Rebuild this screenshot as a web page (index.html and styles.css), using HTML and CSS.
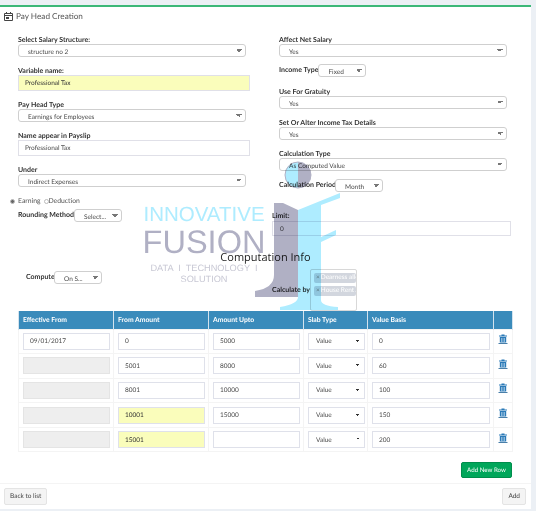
FILE: index.html
```html
<!DOCTYPE html>
<html lang="en">
<head>
    <meta charset="UTF-8">
    <title>Pay Head Creation</title>
    <link rel="stylesheet" href="styles.css">
</head>
<body>
    <main class="box">
        <header class="box-header">
            <svg class="cal-icon" width="9" height="9" viewBox="0 0 9 9">
                <path d="M0.5 1.5h8v7h-8z M0.5 3.5h8 M2.5 0v2 M6.5 0v2" fill="none" stroke="#444" stroke-width="1"/>
                <rect x="2" y="5" width="3" height="2" fill="#444"/>
            </svg>
            <h1>Pay Head Creation</h1>
        </header>

        <section class="form-cols">
            <div class="col">
                <div class="field">
                    <label>Select Salary Structure:</label>
                    <select class="sel"><option>structure no 2</option></select>
                </div>
                <div class="field">
                    <label>Variable name:</label>
                    <input class="txt wide required" value="Professional Tax">
                </div>
                <div class="field">
                    <label>Pay Head Type</label>
                    <select class="sel"><option>Earnings for Employees</option></select>
                </div>
                <div class="field">
                    <label>Name appear in Payslip</label>
                    <input class="txt wide" value="Professional Tax">
                </div>
                <div class="field">
                    <label>Under</label>
                    <select class="sel"><option>Indirect Expenses</option></select>
                </div>
            </div>
            <div class="col">
                <div class="field">
                    <label>Affect Net Salary</label>
                    <select class="sel"><option>Yes</option></select>
                </div>
                <div class="field-inline income-row">
                    <label>Income Type</label>
                    <select class="sel small"><option>Fixed</option></select>
                </div>
                <div class="field">
                    <label>Use For Gratuity</label>
                    <select class="sel"><option>Yes</option></select>
                </div>
                <div class="field">
                    <label>Set Or Alter Income Tax Details</label>
                    <select class="sel"><option>Yes</option></select>
                </div>
                <div class="field">
                    <label>Calculation Type</label>
                    <select class="sel"><option>As Computed Value</option></select>
                </div>
                <div class="field-inline period-row">
                    <label>Calculation Period</label>
                    <select class="sel small"><option>Month</option></select>
                </div>
            </div>
        </section>

        <section class="rounding-row">
            <div class="rounding-left">
                <div class="radios">
                    <span class="radio checked"></span><span class="radio-text">Earning</span>
                    <span class="radio"></span><span>Deduction</span>
                </div>
                <div class="field-inline rounding-field">
                    <label>Rounding Method</label>
                    <select class="sel small"><option>Select...</option></select>
                </div>
            </div>
            <div class="limit">
                <label>Limit:</label>
                <input class="txt limit-input" value="0">
            </div>
        </section>

        <h2 class="info-title">Computation Info</h2>

        <section class="compute-row">
            <div class="field-inline compute-field">
                <label>Compute</label>
                <select class="sel small"><option>On S...</option></select>
            </div>
            <div class="field-inline calc-by">
                <label>Calculate by</label>
                <div class="multi">
                    <span class="chip"><b>×</b>Dearness allo</span>
                    <span class="chip"><b>×</b>House Rent A</span>
                </div>
            </div>
        </section>

        <table class="slabs">
            <colgroup>
                <col class="c-date"><col class="c-amt"><col class="c-amt"><col class="c-type"><col class="c-basis"><col class="c-del">
            </colgroup>
            <thead>
                <tr><th>Effective From</th><th>From Amount</th><th>Amount Upto</th><th>Slab Type</th><th>Value Basis</th><th></th></tr>
            </thead>
            <tbody>
                <tr>
                    <td><input class="cell date" value="09/01/2017"></td>
                    <td><input class="cell" value="0"></td>
                    <td><input class="cell" value="5000"></td>
                    <td><select class="cell native"><option>Value</option></select></td>
                    <td><input class="cell" value="0"></td>
                    <td><svg class="trash" viewBox="0 0 10 10"><use href="#trash-shape"/></svg></td>
                </tr>
                <tr>
                    <td><input class="cell off" disabled></td>
                    <td><input class="cell" value="5001"></td>
                    <td><input class="cell" value="8000"></td>
                    <td><select class="cell native"><option>Value</option></select></td>
                    <td><input class="cell" value="60"></td>
                    <td><svg class="trash" viewBox="0 0 10 10"><use href="#trash-shape"/></svg></td>
                </tr>
                <tr>
                    <td><input class="cell off" disabled></td>
                    <td><input class="cell" value="8001"></td>
                    <td><input class="cell" value="10000"></td>
                    <td><select class="cell native"><option>Value</option></select></td>
                    <td><input class="cell" value="100"></td>
                    <td><svg class="trash" viewBox="0 0 10 10"><use href="#trash-shape"/></svg></td>
                </tr>
                <tr>
                    <td><input class="cell off" disabled></td>
                    <td><input class="cell required" value="10001"></td>
                    <td><input class="cell" value="15000"></td>
                    <td><select class="cell native"><option>Value</option></select></td>
                    <td><input class="cell" value="150"></td>
                    <td><svg class="trash" viewBox="0 0 10 10"><use href="#trash-shape"/></svg></td>
                </tr>
                <tr>
                    <td><input class="cell off" disabled></td>
                    <td><input class="cell required" value="15001"></td>
                    <td><input class="cell"></td>
                    <td><select class="cell native"><option>Value</option></select></td>
                    <td><input class="cell" value="200"></td>
                    <td><svg class="trash" viewBox="0 0 10 10"><use href="#trash-shape"/></svg></td>
                </tr>
            </tbody>
        </table>

        <div class="add-row-wrap">
            <button class="btn-green">Add New Row</button>
        </div>

        <footer class="box-footer">
            <button class="btn">Back to list</button>
            <button class="btn">Add</button>
        </footer>

        <!-- logo sits over the form as a watermark -->
        <div class="watermark">
            <div class="wm-text">
                <div class="wm-innovative">INNOVATIVE</div>
                <div class="wm-fusion">FUSION</div>
                <div class="wm-tag">DATA &nbsp;I&nbsp; TECHNOLOGY &nbsp;I<br>SOLUTION</div>
            </div>
            <svg class="wm-i" width="90" height="150" viewBox="0 0 90 150">
                <path d="M28 2A13 13 0 0 0 28 28z" fill="#aeecff"/>
                <path d="M28 2A13 13 0 0 1 28 28z" fill="#b0b0c4"/>
                <circle cx="28" cy="15" r="13" fill="none" stroke="#b0b0c4" stroke-width="1"/>
                <path d="M28 50L70 33V38L51 45V77L66 70V75L51 82V140Q51 146 68 147V150H10V147Q28 144 28 137z" fill="#aeecff"/>
                <path d="M4 43H13L28 50V137H-15V131Q4 128 4 115z" fill="#b0b0c4"/>
            </svg>
        </div>
    </main>

    <svg width="0" height="0" class="defs">
        <symbol id="trash-shape" viewBox="0 0 10 10">
            <path d="M3.5 0.5h3v1h2.5v1h-8v-1h2.5z" fill="#2a7ab8"/>
            <path d="M1.8 3h6.4v5.5h-6.4z" fill="#2a7ab8"/>
            <path d="M3.5 4v4M5 4v4M6.5 4v4" stroke="#cfe3f2" stroke-width="0.6"/>
            <path d="M0.5 9h9v0.8h-9z" fill="#1d5f94"/>
        </symbol>
    </svg>
</body>
</html>
```

FILE: styles.css
```css
* {
    box-sizing: border-box;
}

body {
    margin: 0;
    padding-top: 5px;
    height: 511px;
    overflow: hidden;
    background-color: #ecf0f5;
    font-family: 'Lato', sans-serif;
    font-size: 6.5px;
    color: #555;
    text-rendering: geometricPrecision;
}

input,
select,
button {
    text-rendering: geometricPrecision;
}

.box {
    position: relative;
    width: 531px;
    height: 504px;
    background-color: #fff;
    border-top: 2px solid #3cb878;
}

.box-header {
    display: flex;
    align-items: center;
    gap: 3px;
    height: 18px;
    padding-left: 4px;
}

.box-header h1 {
    margin: 0;
    font-size: 8.2px;
    font-weight: 400;
    color: #555;
}

.form-cols {
    display: grid;
    grid-template-columns: 232px 229px;
    column-gap: 29px;
    margin: 10px 0 0 18px;
}

label {
    font-weight: 700;
    color: #333;
    line-height: 9px;
    font-size: 7px;
    white-space: nowrap;
}

.field {
    margin-bottom: 9px;
}

.field label {
    display: block;
    padding-top: 1px;
    line-height: 8px;
}

.field-inline {
    display: flex;
    align-items: center;
}

.income-row {
    margin: -2px 0 10px;
}

.period-row {
    margin-top: -1px;
}

.period-row label {
    width: 56px;
}

.sel {
    display: block;
    width: 228px;
    height: 13px;
    padding: 3px 0 0 9px;
    border: 1px solid #cfcfcf;
    border-radius: 3px;
    font: inherit;
    line-height: 10px;
    color: #4a4a4a;
    background-color: transparent;
    background-image: linear-gradient(45deg, transparent 50%, #777 50%), linear-gradient(135deg, #777 50%, transparent 50%);
    background-size: 3px 3px;
    background-repeat: no-repeat;
    background-position: calc(100% - 6px) 4px, calc(100% - 3px) 4px;
    appearance: none;
    outline: none;
}

.sel.small {
    width: 48px;
    flex: none;
}

.txt {
    height: 16px;
    padding: 1px 6px 0;
    border: 1px solid #e0e0e8;
    font: inherit;
    color: #4a4a4a;
    background-color: transparent;
    outline: none;
}

.txt.wide {
    display: block;
    width: 232px;
}

.txt.required,
.cell.required {
    background-color: #fafdbb;
    color: #333;
}

.rounding-row {
    display: flex;
    margin: 0 0 0 10px;
}

.rounding-left {
    width: 262px;
}

.radios {
    display: flex;
    align-items: center;
    height: 10px;
    font-size: 6.8px;
}

.radio {
    width: 5px;
    height: 5px;
    margin-right: 3px;
    border: 1px solid #bbb;
    border-radius: 50%;
}

.radio + .radio-text {
    margin-right: 3px;
}

.radio:not(.checked) {
    margin-right: 0;
}

.radio.checked {
    background-color: #666;
}

.rounding-field {
    margin: 3px 0 0 8px;
}

.limit {
    width: 239px;
    margin-top: 16px;
}

.limit label {
    display: block;
}

.limit-input {
    display: block;
    width: 239px;
    height: 15px;
    padding-left: 7px;
}

.info-title {
    margin: 14px 0 0;
    height: 16px;
    font-family: 'Open Sans', sans-serif;
    font-size: 11px;
    line-height: 16px;
    font-weight: 400;
    color: #222;
    text-align: center;
}

.compute-row {
    display: flex;
    height: 43px;
    margin-top: 2px;
}

.compute-field {
    align-self: flex-start;
    width: 246px;
    margin: 3px 0 0 26px;
}

.compute-field label {
    width: 28px;
}

.calc-by label {
    width: 38px;
    padding-top: 1px;
}

.multi {
    display: flex;
    flex-direction: column;
    gap: 3px;
    width: 47px;
    height: 42px;
    padding: 3px 0 0 3px;
    border: 1px solid #d8d8d8;
    border-radius: 2px;
    overflow: hidden;
}

.chip {
    display: block;
    flex: none;
    height: 10px;
    padding-left: 2px;
    border-radius: 2px;
    background-color: #d2d6de;
    color: #fff;
    font-size: 6.5px;
    line-height: 10px;
    white-space: nowrap;
}

.chip b {
    margin-right: 1px;
    color: #888;
    font-weight: 400;
}

.slabs {
    width: 494px;
    margin-left: 18px;
    table-layout: fixed;
    border-collapse: collapse;
}

.c-date,
.c-amt {
    width: 95px;
}

.c-type {
    width: 64px;
}

.c-basis {
    width: 126px;
}

.c-del {
    width: 19px;
}

.slabs th {
    height: 18px;
    padding: 1px 4px 0;
    background-color: #3a8bbb;
    border: 1px solid #d4e3ee;
    border-width: 0 1px;
    color: #fff;
    font-size: 6.8px;
    font-weight: 700;
    text-align: left;
}

.slabs td {
    height: 24.6px;
    padding: 0 4px;
    border: 1px solid #f4f4f4;
    vertical-align: middle;
}

.cell {
    display: block;
    width: 87px;
    height: 17px;
    padding: 1px 6px 0;
    border: 1px solid #dfe1ea;
    font: inherit;
    color: #4a4a4a;
    background-color: #fff;
    outline: none;
}

.cell.off {
    background-color: #eee;
    border-color: #e4e4e4;
}

.cell.native {
    width: 57px;
    padding-left: 7px;
    appearance: none;
    background-image: linear-gradient(45deg, transparent 50%, #333 50%), linear-gradient(135deg, #333 50%, transparent 50%);
    background-size: 2px 2px;
    background-repeat: no-repeat;
    background-position: calc(100% - 6px) 6px, calc(100% - 4px) 6px;
}

.slabs td:nth-child(5) .cell {
    width: 118px;
}

.trash {
    display: block;
    width: 10px;
    height: 10px;
    margin: -4px 0 0 0;
}

.add-row-wrap {
    display: flex;
    justify-content: flex-end;
    width: 512px;
    margin-top: 10px;
}

.btn-green {
    width: 51px;
    height: 16px;
    padding: 0;
    background-color: #00a65a;
    border: 1px solid #008d4c;
    border-radius: 2px;
    color: #fff;
    font: inherit;
    font-size: 6.2px;
}

.box-footer {
    display: flex;
    justify-content: space-between;
    margin-top: 5px;
    padding: 4px 5px 0 4px;
    border-top: 1px solid #f4f4f4;
}

.btn {
    height: 17px;
    padding: 0 5px;
    background-color: #f4f4f4;
    border: 1px solid #e4e4e4;
    border-radius: 2px;
    color: #444;
    font: inherit;
}

.watermark {
    position: absolute;
    top: 0;
    left: 0;
    width: 531px;
    height: 504px;
    mix-blend-mode: multiply;
    pointer-events: none;
}

.wm-text {
    position: absolute;
    top: 196px;
    left: 140px;
    width: 128px;
    font-family: 'Liberation Sans', sans-serif;
    text-align: center;
    white-space: nowrap;
}

.wm-innovative {
    font-size: 20.5px;
    line-height: 24px;
    color: #aeecff;
}

.wm-fusion {
    font-size: 32.5px;
    line-height: 30px;
    color: #b0b0c4;
}

.wm-tag {
    margin-top: 6px;
    font-size: 9.2px;
    line-height: 10.5px;
    color: #c8c8d4;
}

.wm-i {
    position: absolute;
    top: 153px;
    left: 270px;
    overflow: visible;
}

.defs {
    position: absolute;
}
```
